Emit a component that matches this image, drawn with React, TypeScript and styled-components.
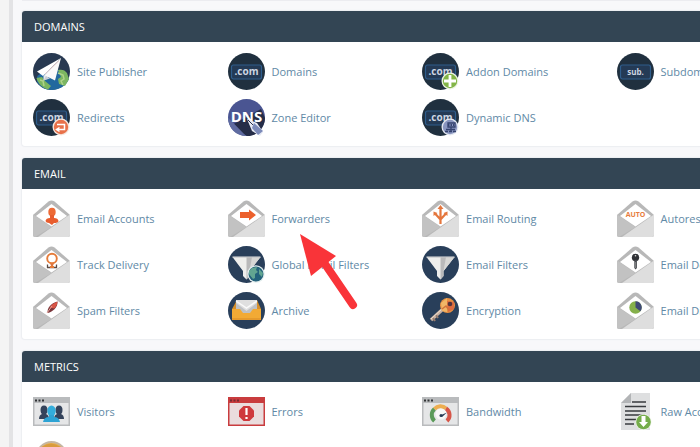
import React from "react";
import styled, { createGlobalStyle } from "styled-components";

const GlobalStyle = createGlobalStyle`
  * { box-sizing: border-box; }
  html, body { margin: 0; height: 100%; overflow: hidden; }
  #root { height: 100%; }
  body { font-family: "Open Sans", "Noto Sans", sans-serif; background: #f8f8fa; }
`;

const Page = styled.div`
  display: flex;
  height: 100%;
  overflow: hidden;
`;

const SideRail = styled.aside`
  flex: none;
  width: 13px;
  background: #f4f4f4;
  border-right: 4px solid #e3e3e5;
`;

const Main = styled.main`
  flex: 1;
  min-width: 0;
  padding-left: 9px;
`;

const PreviousEdge = styled.div`
  width: 118%;
  height: 1px;
  margin-bottom: 10px;
  background: #ececf0;
`;

const Panel = styled.section`
  width: 118%;
  margin-bottom: 12px;
  background: #fff;
  border-radius: 3px;
  box-shadow: 0 0 1px 1px #eceef1;
`;

const PanelTitle = styled.h2`
  margin: 0;
  padding: 0 12px;
  height: 31px;
  line-height: 31px;
  font-size: 11px;
  font-weight: 400;
  color: #fff;
  background: #334554;
  border-radius: 3px 3px 0 0;
`;

const Grid = styled.ul`
  list-style: none;
  margin: 0;
  padding: 11px 11px 10px;
  display: grid;
  grid-template-columns: repeat(4, 1fr);
  row-gap: 9px;
`;

const Item = styled.li`
  position: relative;
  min-width: 0;
`;

const ItemLink = styled.a`
  display: flex;
  align-items: center;
  gap: 7px;
  height: 37px;
  font-size: 11px;
  line-height: 16px;
  white-space: nowrap;
  color: #6189a6;
  text-decoration: none;
  &:hover { text-decoration: underline; }
`;

const IconSvg = styled.svg`
  flex: none;
  display: block;
  width: 37px;
  height: 37px;
  font-family: "Open Sans", sans-serif;
`;

const Pointer = styled.svg`
  position: absolute;
  z-index: 2;
  left: 71px;
  top: 32px;
  width: 62px;
  height: 80px;
  pointer-events: none;
`;

type Children = { children?: React.ReactNode };

const Icon = ({ children }: Children) => (
  <IconSvg viewBox="0 0 37 37" aria-hidden="true">{children}</IconSvg>
);

const Disc = ({ fill = "#20303f" }: { fill?: string }) => <circle cx="18.5" cy="18.5" r="18.5" fill={fill} />;

const Tag = ({ text, children }: Children & { text: string }) => (
  <Icon>
    <Disc />
    <rect x="3.5" y="12" width="30" height="14" rx="2" fill="#243a55" stroke="#2f5d8c" strokeWidth="1.2" />
    <text x="18.5" y="22" textAnchor="middle" fontSize={text === "sub." ? 8 : 10} fontWeight="700" fill="#ccd5e2">{text}</text>
    {children}
  </Icon>
);

const RedirectIcon = () => (
  <Tag text=".com">
    <circle cx="28" cy="28" r="8.5" fill="#f6e8e0" />
    <circle cx="28" cy="28" r="7.2" fill="#e8714a" />
    <path d="M24 25.500h7.500v5H23.500M26.500 28.500l-3 2 3 2" fill="none" stroke="#fff" strokeWidth="1.500" />
  </Tag>
);

const AddonIcon = () => (
  <Tag text=".com">
    <circle cx="28" cy="28" r="8.5" fill="#edf4e4" />
    <circle cx="28" cy="28" r="7.2" fill="#83b547" />
    <path d="M28 22v12M22 28h12" stroke="#fff" strokeWidth="2.8" />
  </Tag>
);

const DynamicIcon = () => (
  <Tag text=".com">
    <circle cx="28" cy="28" r="8.5" fill="#e4e8f1" />
    <circle cx="28" cy="28" r="7.2" fill="#8995bf" />
    <path d="M26 24h7v4h-7zM23 32.500h3M27 32.500h3M31 32.500h3M24 30.500h9M29 28v4" fill="none" stroke="#35436f" strokeWidth="1.300" />
    <path d="M26 26h6" stroke="#35436f" strokeWidth="2" strokeDasharray="1.5 1" />
  </Tag>
);

const PublisherIcon = () => (
  <Icon>
    <Disc fill="#283951" />
    <path d="M4 24C9 17 26 12 34 22l2 4C33 33 26 37 18.5 37 12 37 7 34 4 29z" fill="#22689e" />
    <path d="M3.500 25 9 24l3 4 6 5-3 3.500C10 35 5 31 3.500 25zM25 17c4-1 7 0 9 3l2 6-4 7-6-2-1-5 3-2z" fill="#7cb661" />
    <path d="M25 20l5 2 1 4-3 2 2 4M7 27l3 1 1 5" fill="none" stroke="#b0d38b" strokeWidth="1.5" />
    <path d="M28 5 4 18.500l6 4.500z" fill="#fff" />
    <path d="m28 5-17.500 18v4.500L14 26z" fill="#e8e9ec" />
    <path d="M28 5 12 22.500l10 5z" fill="#fafafa" />
    <path d="m10.500 27.500 2.500-4.500 4 2.500z" fill="#c9cdd4" />
    <path d="M26 8 12 21" stroke="#e9c9c9" strokeWidth=".8" />
  </Icon>
);

const ZoneIcon = () => (
  <Icon>
    <Disc fill="#4a5592" />
    <path d="M2 27 33 10l4 9c0 9-7 18-18 18z" fill="#252d48" />
    <path d="M0 18.500 18 37C8 37 0 29 0 18.500z" fill="#5f6ba0" />
    <text x="18.500" y="23" textAnchor="middle" fontSize="15" fontWeight="700" fill="#fff">DNS</text>
    <path d="m19 20 10 4 6 9-3 4-8-5z" fill="#e7eaf4" />
    <path d="m26 24 9 8-5 4-6-7z" fill="#7c8ab9" />
    <path d="m20 21 5 5" stroke="#29314c" />
  </Icon>
);

const Envelope = ({ children }: Children) => (
  <Icon>
    <path d="M0 15 15.500 1.500q3-2 6 0L37 15v20q0 2-2 2H2q-2 0-2-2z" fill="#b8b8b8" />
    <path d="M0 14.500 18.500 27 2 37q-2 0-2-2z" fill="#c2c2c2" />
    <path d="M37 14.500 5 37h30q2 0 2-2z" fill="#dedede" />
    <path d="M3 16 18.500 4 34 16 18.500 26.500z" fill="#fff" />
    {children}
  </Icon>
);

const AccountIcon = () => (
  <Envelope>
    <ellipse cx="19" cy="12" rx="3.700" ry="4.300" fill="#ed6a35" />
    <path d="M17 15h4v3q4 0 4.500 3-.500 2-4.500 2l-2 2-3-2q-3 0-3.500-2 .500-3 4.500-3z" fill="#e85d2e" />
  </Envelope>
);
const ForwardIcon = () => (
  <Envelope><path d="M12 12h9V9.500l7 5.500-7 5.500V18h-9z" fill="#ec602c" /></Envelope>
);
const RoutingIcon = () => (
  <Envelope>
    <path d="M18.500 24V7M18.500 19.500 13 13.500M18.500 19.500l5.500-6" fill="none" stroke="#e4763d" strokeWidth="2.200" />
    <path d="m18.500 5-3 4h6zM11.500 11.500v4.500l4-3zM25.500 11.500v4.500l-4-3z" fill="#e4763d" />
  </Envelope>
);
const AutoIcon = () => (
  <Envelope><text x="18.500" y="17" textAnchor="middle" fontSize="7" fontWeight="700" fill="#e77d3e">AUTO</text></Envelope>
);
const TrackIcon = () => (
  <Envelope>
    <circle cx="19" cy="12.500" r="4.800" fill="#fff" stroke="#e57b39" strokeWidth="1.900" />
    <path d="M17 17.500 19 22l2-4.500" fill="#dd7641" />
    <path d="M14.500 18.500v3h9v-3" fill="none" stroke="#5b4a43" strokeWidth="1.300" />
    <path d="M17 21h4" stroke="#e57b39" strokeWidth="2" />
  </Envelope>
);
const DeliverabilityIcon = () => (
  <Envelope>
    <circle cx="18.500" cy="11.500" r="3.700" fill="#303236" />
    <circle cx="18.500" cy="9.700" r=".8" fill="#ddd" />
    <path d="M17.300 14h2.600v8l-1.300 1.500-1.300-1.500z" fill="#45484d" />
    <path d="M18.600 16v6" stroke="#aaa" strokeWidth=".6" />
  </Envelope>
);
const SpamIcon = () => (
  <Envelope>
    <path d="M14.500 21C14 16 18 11 24.500 9.500 25 15 20 20 14.500 21z" fill="#7b363b" />
    <path d="M16.500 15.500Q20 11 24.500 9.500q0 4-3 7z" fill="#d95445" />
    <path d="m14 21 5-7" stroke="#e5a49a" />
  </Envelope>
);
const DiskIcon = () => (
  <Envelope>
    <circle cx="18.500" cy="15.500" r="6.200" fill="#85b04b" />
    <path d="M18.500 15.500V9.300a6.200 6.200 0 0 1 4.900 10z" fill="#3f4976" />
  </Envelope>
);

const Funnel = () => (
  <>
    <path d="M4.500 11h28l-11 14v5l-3 3.500L15 30v-5z" fill="#eeeeec" />
    <path d="M18.500 11h14l-11 14v5l-3 3.500z" fill="#b9b9ba" />
    <path d="M24 11h8.500l-11 14z" fill="#d7d7d5" />
    <path d="M4.500 11h28" stroke="#c5c7ca" strokeWidth="1.200" />
  </>
);
const FilterIcon = () => <Icon><Disc fill="#293f5a" /><Funnel /></Icon>;
const GlobalFilterIcon = () => (
  <Icon>
    <Disc fill="#293f5a" /><Funnel />
    <circle cx="28" cy="28" r="8.700" fill="#e4eeee" />
    <circle cx="28" cy="28" r="7.500" fill="#24627b" />
    <path d="m21 25 3-3 5-1-1 3 2 2-3 2v4l-2 1-4-5zM31 23l4 4-1 4-3-3z" fill="#62a591" />
  </Icon>
);
const ArchiveIcon = () => (
  <Icon>
    <Disc fill="#293f5a" />
    <path d="M9 8h20l4 9v11H4V17z" fill="#d7902c" />
    <path d="M8 8h21v15H8z" fill="#dfdfdf" />
    <path d="m8 11 10.500 8L29 11v9l-10.500 4L8 20z" fill="#bfc1c4" />
    <path d="m8 9 10.500 7L29 9" fill="none" stroke="#fafafa" strokeWidth="1.500" />
    <path d="M4 17h8l3 4h7l3-4h8v11H4z" fill="#f2aa35" />
    <path d="M4 27h29" stroke="#d98a27" />
  </Icon>
);
const EncryptionIcon = () => (
  <Icon>
    <Disc fill="#293f5a" />
    <path d="m21 17-12 11" stroke="#c9b0a0" strokeWidth="3.500" />
    <path d="m11 26 2 3m1-6 2 3" stroke="#967c6d" strokeWidth="2" />
    <path d="m21 16-12 11" stroke="#eee1d2" />
    <circle cx="25.500" cy="13.500" r="7.500" fill="#e79142" />
    <path d="m19 11 6-5v14l-5-1z" fill="#f1b667" />
    <path d="m25 9 7 1v7l-6 3z" fill="#df6c3f" />
    <circle cx="28" cy="12" r="2.300" fill="#52333c" />
    <path d="m20 17 4-3 3 4" stroke="#d2723c" strokeWidth="1.500" fill="none" />
  </Icon>
);

const BrowserFrame = ({ children, red = false }: Children & { red?: boolean }) => (
  <Icon>
    <path d="M0 4h37v29H0z" fill={red ? "#c93c3e" : "#b9bbbd"} />
    <path d="M1.500 10h34v21.500h-34z" fill={red ? "#eadcdd" : "#e5e6e7"} />
    <path d="M2 6.500h2v2H2zm3.500 0h2v2h-2zm3.500 0h2v2H9z" fill={red ? "#742d33" : "#303235"} />
    {children}
  </Icon>
);
const VisitorsIcon = () => (
  <BrowserFrame>
    {[11, 26].map((x) => (
      <g key={x} fill="#34435b">
        <ellipse cx={x} cy="17" rx="3.500" ry="4.500" />
        <path d={`M${x - 5} 26q0-4 3-5h4q3 1 3 5z`} />
      </g>
    ))}
    <ellipse cx="18.500" cy="18" rx="4.200" ry="5.500" fill="#33addb" />
    <path d="M16 22h5v2q5 0 6 5H10q1-5 6-5z" fill="#2da3d4" />
  </BrowserFrame>
);
const ErrorsIcon = () => (
  <BrowserFrame red>
    <path d="M15.500 13h6l4.500 4.500v6L21.500 28h-6L11 23.500v-6z" fill="#cf393d" />
    <path d="M18.500 15v7M18.500 24v2" stroke="#fff" strokeWidth="2.200" />
  </BrowserFrame>
);
const BandwidthIcon = () => (
  <BrowserFrame>
    <path d="M12.500 28A8 8 0 0 1 12.500 16" fill="none" stroke="#5a9a58" strokeWidth="4" />
    <path d="M12.500 16a8 8 0 0 1 11.500-.5" fill="none" stroke="#edae51" strokeWidth="4" />
    <path d="M24 15.500a8 8 0 0 1 1 12.500" fill="none" stroke="#d65548" strokeWidth="4" />
    <circle cx="19" cy="21" r="5.500" fill="#f7f7f6" />
    <path d="m18 22.500 7-3-5 4.500z" fill="#273b55" />
    <circle cx="19" cy="22.500" r="1.500" fill="#273b55" />
  </BrowserFrame>
);
const RawIcon = () => (
  <Icon>
    <path d="M14 0h19v37H4V10z" fill="#dedfe0" />
    <path d="M14 0v10H4z" fill="#b2b4b6" />
    <path d="M15 9h14M8 13.500h21M8 18h21M8 22h20M8 26.500h12M8 31h9" stroke="#383b3e" strokeWidth="1.600" />
    <circle cx="26.500" cy="29" r="8" fill="#eff5e9" />
    <circle cx="26.500" cy="29" r="7.300" fill="#74ac4a" />
    <path d="M24.500 23h4v6H31l-4.500 5-4.500-5h2.500z" fill="#fff" />
  </Icon>
);
const CoinIcon = () => (
  <Icon>
    <circle cx="18.500" cy="18" r="16" fill="#c5b6a2" />
    <circle cx="18.500" cy="18" r="14" fill="#e9b252" />
    <path d="M9 10q9-7 18 0" stroke="#d99b3e" strokeWidth="4" fill="none" />
  </Icon>
);

type Entry = { label: string; icon: React.ReactNode; pointed?: boolean };

const sections: { title: string; entries: Entry[] }[] = [
  {
    title: "DOMAINS",
    entries: [
      { label: "Site Publisher", icon: <PublisherIcon /> },
      { label: "Domains", icon: <Tag text=".com" /> },
      { label: "Addon Domains", icon: <AddonIcon /> },
      { label: "Subdomains", icon: <Tag text="sub." /> },
      { label: "Redirects", icon: <RedirectIcon /> },
      { label: "Zone Editor", icon: <ZoneIcon /> },
      { label: "Dynamic DNS", icon: <DynamicIcon /> },
    ],
  },
  {
    title: "EMAIL",
    entries: [
      { label: "Email Accounts", icon: <AccountIcon /> },
      { label: "Forwarders", icon: <ForwardIcon />, pointed: true },
      { label: "Email Routing", icon: <RoutingIcon /> },
      { label: "Autoresponders", icon: <AutoIcon /> },
      { label: "Track Delivery", icon: <TrackIcon /> },
      { label: "Global Email Filters", icon: <GlobalFilterIcon /> },
      { label: "Email Filters", icon: <FilterIcon /> },
      { label: "Email Deliverability", icon: <DeliverabilityIcon /> },
      { label: "Spam Filters", icon: <SpamIcon /> },
      { label: "Archive", icon: <ArchiveIcon /> },
      { label: "Encryption", icon: <EncryptionIcon /> },
      { label: "Email Disk Usage", icon: <DiskIcon /> },
    ],
  },
  {
    title: "METRICS",
    entries: [
      { label: "Visitors", icon: <VisitorsIcon /> },
      { label: "Errors", icon: <ErrorsIcon /> },
      { label: "Bandwidth", icon: <BandwidthIcon /> },
      { label: "Raw Access", icon: <RawIcon /> },
      { label: "", icon: <CoinIcon /> },
    ],
  },
];

export default function App() {
  return (
    <Page>
      <GlobalStyle />
      <SideRail />
      <Main>
        <PreviousEdge />
        {sections.map(({ title, entries }) => (
          <Panel key={title}>
            <PanelTitle>{title}</PanelTitle>
            <Grid>
              {entries.map(({ label, icon, pointed }) => (
                <Item key={label}>
                  <ItemLink href="#">{icon}{label && <span>{label}</span>}</ItemLink>
                  {pointed && (
                    <Pointer viewBox="0 0 62 80" aria-hidden="true">
                      <path d="M26 32 54 73" stroke="#f93439" strokeWidth="8" strokeLinecap="round" />
                      <path d="M1 2 37 24 12 44z" fill="#f93439" />
                    </Pointer>
                  )}
                </Item>
              ))}
            </Grid>
          </Panel>
        ))}
      </Main>
    </Page>
  );
}
